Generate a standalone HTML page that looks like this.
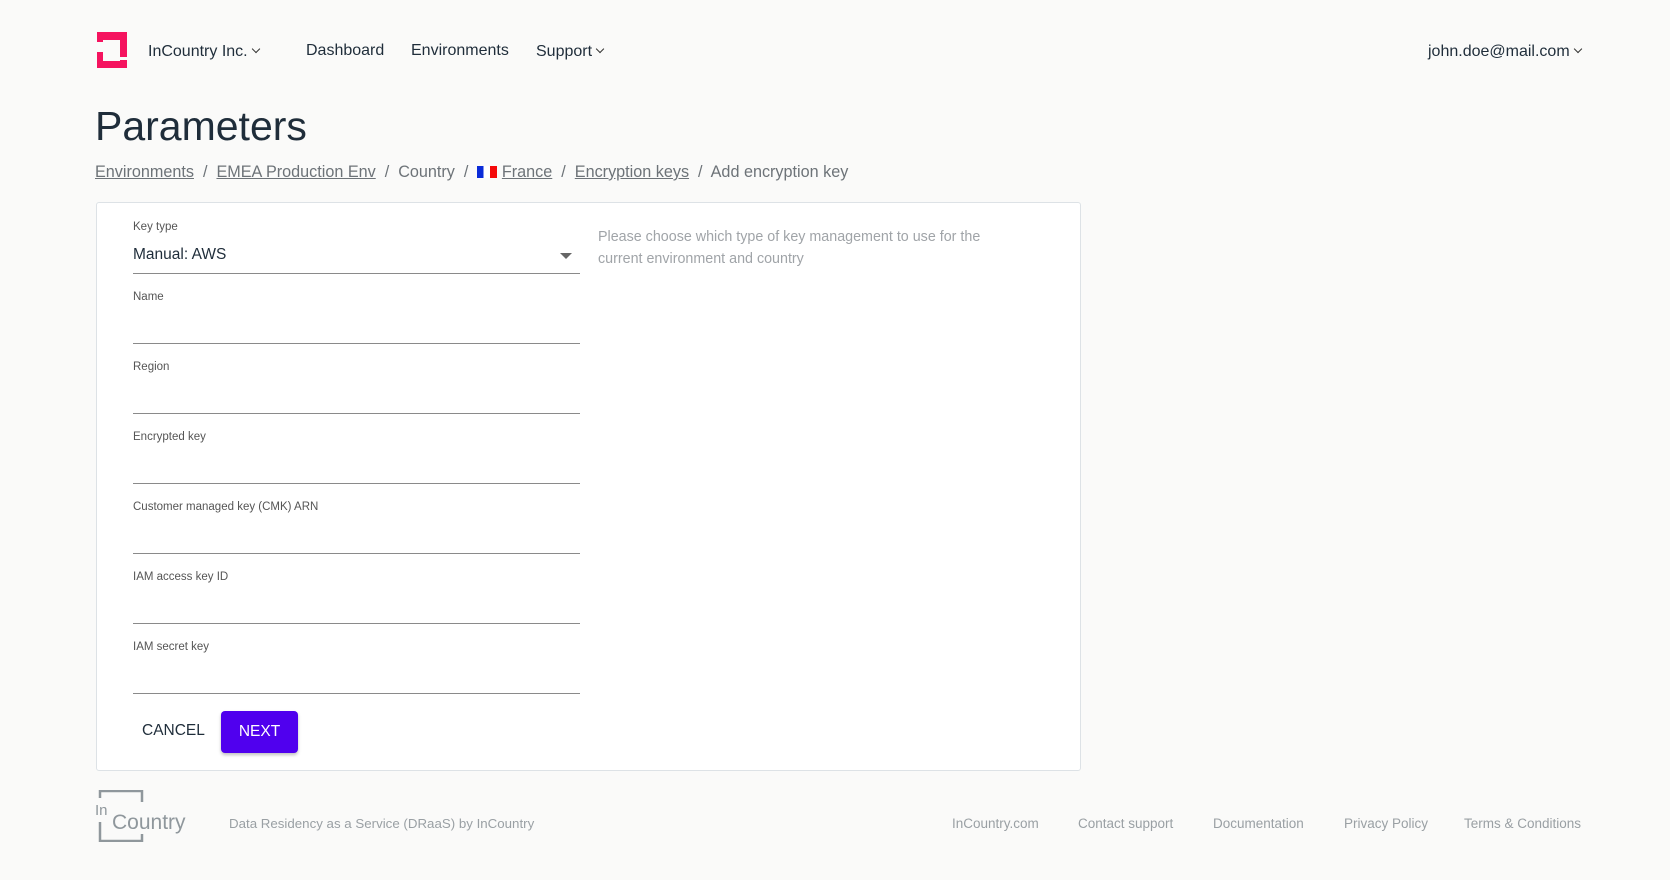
<!DOCTYPE html>
<html><head><meta charset="utf-8"><style>
*{margin:0;padding:0;box-sizing:border-box}
body{width:1670px;height:880px;background:#fafaf9;font-family:"Liberation Sans",Arial,sans-serif;color:#1f2d3a;position:relative;overflow:hidden}
.a{position:absolute;white-space:nowrap}
.nav{font-size:16px;color:#1f2d3a;top:43px}
.car{display:inline-block;width:6px;height:6px;border-right:1.3px solid #333;border-bottom:1.3px solid #333;transform:rotate(45deg);margin-left:5px;position:relative;top:-4px}
.bc{top:163px;font-size:16.2px;color:#6d7378}
.bc u{color:#6d7378;text-decoration:underline}
.card{position:absolute;left:96px;top:202px;width:985px;height:569px;background:#fff;border:1px solid #dde2e6;border-radius:3px}
.lab{position:absolute;left:36px;font-size:11.5px;color:#555}
.line{position:absolute;left:36px;width:447px;height:1px;background:#8a8a8a}
.foot{top:816px;font-size:13.5px;color:#9aa0a4}
</style></head><body>
<svg class="a" style="left:96px;top:32px" width="32" height="37" viewBox="0 0 32 37">
<path fill="#f5135f" d="M1 0H31V25H24V8H7V10H1Z M1 20H7V29H24V28H31V36H1Z"/>
</svg>
<div class="a nav" style="left:148px">InCountry Inc.<span class="car"></span></div>
<div class="a nav" style="left:306px;top:42px">Dashboard</div>
<div class="a nav" style="left:411px;top:42px">Environments</div>
<div class="a nav" style="left:536px">Support<span class="car"></span></div>
<div class="a nav" style="left:1428px">john.doe@mail.com<span class="car"></span></div>
<div class="a" style="left:95px;top:103px;font-size:41px;color:#1f2d3a">Parameters</div>
<div class="a bc" style="left:95px"><u>Environments</u> &nbsp;/&nbsp; <u>EMEA Production Env</u> &nbsp;/&nbsp; Country &nbsp;/&nbsp; <span style="display:inline-block;width:20px;height:12px;vertical-align:-1px;background:linear-gradient(90deg,#0a2bd8 0 33%,#fff 33% 66%,#f50a0a 66%)"></span> <u>France</u> &nbsp;/&nbsp; <u>Encryption keys</u> &nbsp;/&nbsp; Add encryption key</div>
<div class="card">
<div class="lab" style="top:18px">Key type</div>
<div class="a" style="left:36px;top:43px;font-size:15.5px;color:#1f2d3a">Manual: AWS</div>
<div class="a" style="left:463px;top:50px;width:0;height:0;border-left:6px solid transparent;border-right:6px solid transparent;border-top:6px solid #666"></div>
<div class="line" style="top:70px"></div>
<div class="lab" style="top:88px">Name</div><div class="line" style="top:140px"></div>
<div class="lab" style="top:158px">Region</div><div class="line" style="top:210px"></div>
<div class="lab" style="top:228px">Encrypted key</div><div class="line" style="top:280px"></div>
<div class="lab" style="top:298px">Customer managed key (CMK) ARN</div><div class="line" style="top:350px"></div>
<div class="lab" style="top:368px">IAM access key ID</div><div class="line" style="top:420px"></div>
<div class="lab" style="top:438px">IAM secret key</div><div class="line" style="top:490px"></div>
<div class="a" style="left:501px;top:23px;font-size:14.3px;line-height:22px;color:#a0a4a8">Please choose which type of key management to use for the<br>current environment and country</div>
<div class="a" style="left:45px;top:519px;font-size:15.5px;color:#1f2d3a">CANCEL</div>
<div class="a" style="left:124px;top:508px;width:77px;height:42px;background:#5000ee;border-radius:4px;box-shadow:0 2px 3px rgba(0,0,0,.25);color:#fff;font-size:15.5px;text-align:center;line-height:42px">NEXT</div>
</div>
<svg class="a" style="left:94px;top:790px" width="95" height="52" viewBox="0 0 95 52">
<path fill="none" stroke="#8f979c" stroke-width="2.5" d="M6 8V1H48V12 M6 32V51H48V44"/>
<text x="1" y="25" font-family="Liberation Sans" font-size="15" fill="#8f979c">In</text>
<text x="18" y="39" font-family="Liberation Sans" font-size="21" fill="#8f979c">Country</text>
</svg>
<div class="a foot" style="left:229px;font-size:13.3px">Data Residency as a Service (DRaaS) by InCountry</div>
<div class="a foot" style="left:952px">InCountry.com</div>
<div class="a foot" style="left:1078px">Contact support</div>
<div class="a foot" style="left:1213px">Documentation</div>
<div class="a foot" style="left:1344px">Privacy Policy</div>
<div class="a foot" style="left:1464px">Terms &amp; Conditions</div>
</body></html>
